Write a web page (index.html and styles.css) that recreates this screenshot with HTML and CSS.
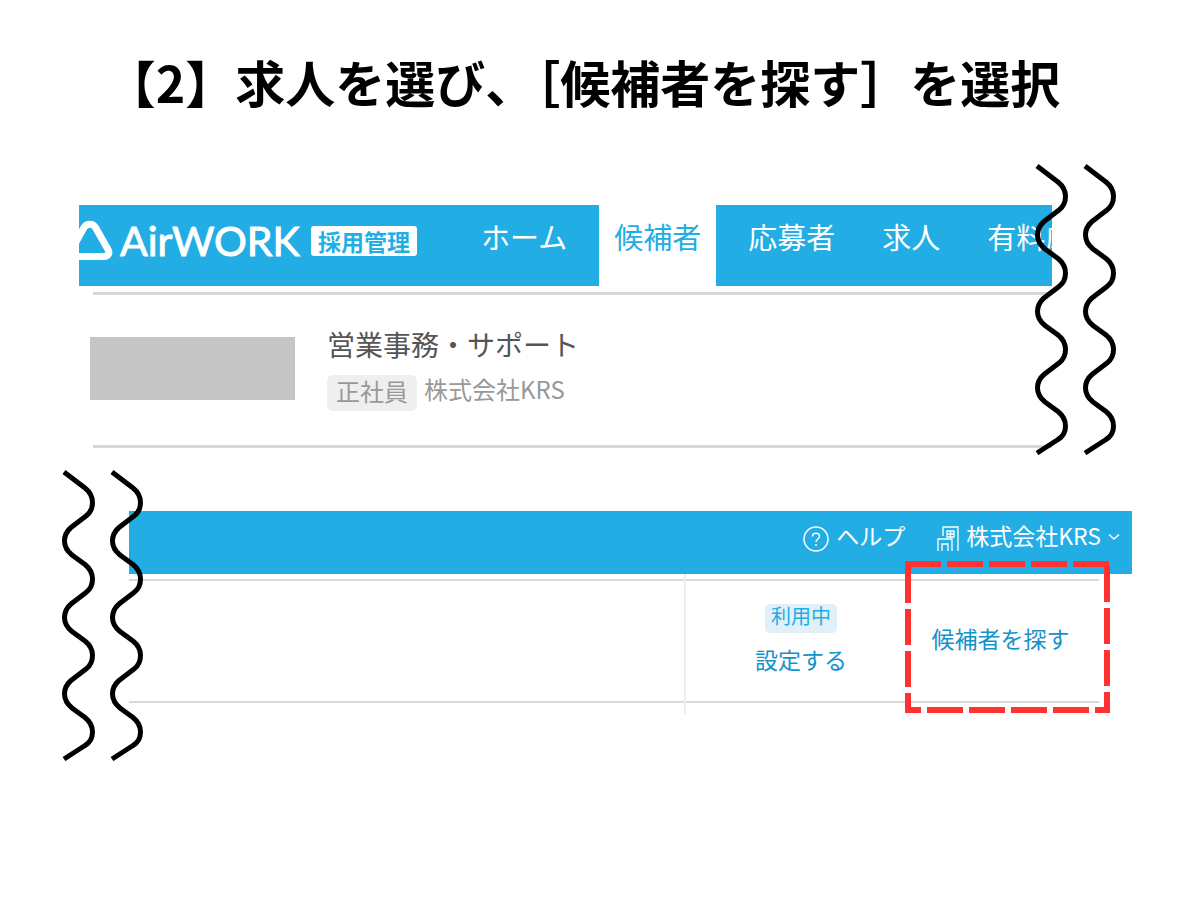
FILE: index.html
```html
<!DOCTYPE html>
<html lang="ja">
<head>
<meta charset="utf-8">
<meta name="viewport" content="width=device-width, initial-scale=1">
<title>求人を選び、候補者を探すを選択</title>
<link rel="stylesheet" href="styles.css">
</head>
<body>
<svg class="defs" aria-hidden="true">
  <symbol id="wave" viewBox="0 0 34 292">
    <path fill="none" stroke="#000" stroke-width="5" d="M3 3L24 19C29 23 31.5 27 31.500 33.500S29 44 25 47L10 58.500C6 62 3.500 66 3.500 72S6 82 11 86L24 95.500C29 99.500 31.500 104 31.500 110S29 120.500 25 123.500L10 135C6 138.500 3.500 142.500 3.500 148.500S6 158.500 11 162.500L24 172C29 176 31.500 180 31.500 186.500S29 197 25 200L10 211.500C6 215 3.500 219 3.500 225S6 235 11 239L24 248.500C29 252.500 31.500 257 31.500 263S29 273.500 24 276.500L3 290"/>
  </symbol>
</svg>
<main class="page">
  <h1 class="title">【2】求人を選び、［候補者を探す］を選択</h1>

  <section class="panel panel-left">
    <header class="bar">
      <a class="logo" href="#">
        <svg class="logo-mark" viewBox="0 0 34 44" aria-hidden="true"><path d="M-6 37.500H24.500C29.500 37.500 31 34 29 30.500L16.500 8.500C14 4 7.500 4 5 8.500L-8 32" fill="none" stroke="#fff" stroke-width="7" stroke-linejoin="round"/></svg>
        <span class="logo-name">AirWORK</span>
        <span class="logo-badge">採用管理</span>
      </a>
      <nav class="tabs">
        <a class="tab" href="#">ホーム</a>
        <a class="tab tab-active" href="#">候補者</a>
        <a class="tab" href="#">応募者</a>
        <a class="tab" href="#">求人</a>
        <a class="tab" href="#">有料応</a>
      </nav>
    </header>
    <article class="job">
      <div class="thumb"></div>
      <div class="job-info">
        <h2 class="job-title">営業事務・サポート</h2>
        <p class="job-meta"><span class="tag">正社員</span><span>株式会社KRS</span></p>
      </div>
    </article>
    <div class="waves waves-right"><svg><use href="#wave"/></svg><svg><use href="#wave"/></svg></div>
  </section>

  <section class="panel panel-right">
    <header class="bar bar-account">
      <a class="bar-link" href="#">
        <svg class="help-icon" viewBox="0 0 26 26" fill="none" stroke="#fff" aria-hidden="true"><circle cx="13" cy="13" r="12" stroke-width="1.500"/><path d="M9.500 10.500C9.500 6 16.500 6 16.500 10.500C16.500 13 13 13 13 16M13 18V20" stroke-width="1.500"/></svg>
        <span>ヘルプ</span>
      </a>
      <button class="bar-link" type="button">
        <svg class="building-icon" viewBox="0 0 22 26" fill="none" stroke="#fff" stroke-width="1.300" aria-hidden="true"><path d="M6 10V1H21V25M1 25V13H15V25M5 25V18H11V25M10 5H17V11H10ZM13.500 5V11M10 8H17"/></svg>
        <span>株式会社KRS</span>
        <svg class="chevron" viewBox="0 0 12 8" fill="none" stroke="#fff" stroke-width="1.500" aria-hidden="true"><path d="M1 1.500L6 6L11 1.500"/></svg>
      </button>
    </header>
    <div class="actions">
      <div class="cell cell-status">
        <span class="status">利用中</span>
        <a class="link" href="#">設定する</a>
      </div>
      <div class="cell cell-search">
        <a class="link" href="#">候補者を探す</a>
        <svg class="marker" viewBox="0 0 205 152" fill="none" stroke="#ff3131" stroke-width="6" stroke-dasharray="36 6" aria-hidden="true">
          <path d="M0 3H204M3 6V152M202 5V150"/><path d="M0 149H205" stroke-dashoffset="20"/>
        </svg>
      </div>
    </div>
    <div class="waves waves-left"><svg><use href="#wave"/></svg><svg><use href="#wave"/></svg></div>
  </section>
</main>
</body>
</html>
```
FILE: styles.css
```css
* { box-sizing: border-box; }
body {
  margin: 0;
  background: #fff;
  color: #555;
  font-family: "Noto Sans CJK JP", sans-serif;
}
a { color: inherit; text-decoration: none; }
h1, h2, p { margin: 0; }
.defs { position: absolute; width: 0; height: 0; }
.page { min-height: 100vh; padding: 45px 0 80px; }
.title {
  padding-right: 34px;
  color: #000;
  font-size: 50px;
  font-weight: 700;
  line-height: 72px;
  text-align: center;
  white-space: nowrap;
}
.panel { position: relative; }
.panel-left { margin: 88px 148px 0 79px; }
.panel-right { margin: 63px 68px 0 129px; }
.bar {
  display: flex;
  height: 81px;
  overflow: hidden;
  background: #22ade5;
  color: #fff;
}
.logo {
  display: flex;
  flex: none;
  align-items: center;
  height: 72px;
}
.logo-mark { width: 34px; height: 44px; }
.logo-name {
  width: 184px;
  margin-left: 7px;
  font-family: Lato, sans-serif;
  font-size: 41px;
  line-height: 48px;
  -webkit-text-stroke: 1px #fff;
}
.logo-badge {
  margin-left: 7px;
  padding: 0 7px;
  border-radius: 3px;
  background: #fff;
  color: #22ade5;
  font-size: 23px;
  font-weight: 700;
  line-height: 30px;
}
.tabs {
  display: flex;
  flex: none;
  gap: 17px;
  margin-left: 49px;
}
.tab {
  padding: 0 15px;
  font-size: 29px;
  line-height: 63px;
  white-space: nowrap;
}
.tab-active { background: #fff; color: #22ade5; }
.job {
  display: flex;
  gap: 32px;
  margin: 6px 0 0 14px;
  height: 156px;
  border-top: 3px solid #d6d6d6;
  border-bottom: 3px solid #d6d6d6;
}
.thumb {
  width: 205px;
  height: 63px;
  margin: 42px 0 0 -3px;
  background: #c5c5c5;
}
.job-info { padding-top: 29px; }
.job-title {
  font-size: 28px;
  font-weight: 400;
  line-height: 40px;
}
.job-meta {
  display: flex;
  gap: 7px;
  margin-top: 11px;
  color: #999;
  font-size: 24px;
  line-height: 28px;
}
.tag {
  height: 36px;
  padding: 2px 9px;
  border-radius: 6px;
  background: #efefef;
}
.bar-account {
  justify-content: flex-end;
  align-items: flex-start;
  gap: 32px;
  height: 63px;
  padding: 7px 12px 0 0;
}
.bar-link {
  display: flex;
  align-items: center;
  gap: 7px;
  padding: 0;
  border: 0;
  background: none;
  color: #fff;
  font-family: inherit;
  font-size: 23px;
  line-height: 34px;
}
.help-icon { width: 26px; height: 26px; margin-top: 7px; }
.building-icon { width: 22px; height: 26px; margin-top: 7px; }
.chevron { width: 12px; height: 8px; margin-top: 4px; }
.actions {
  display: flex;
  justify-content: flex-end;
  height: 124px;
  margin: 5px 33px 0 0;
  border-top: 2px solid #d9d9d9;
  border-bottom: 2px solid #d9d9d9;
}
.cell {
  position: relative;
  display: flex;
  flex-direction: column;
  align-items: center;
}
.cell-status { width: 234px; padding-top: 23px; }
.cell-status::before {
  content: "";
  position: absolute;
  left: 0;
  top: -7px;
  width: 2px;
  height: 140px;
  background: #eee;
}
.status {
  height: 29px;
  padding: 0 6px;
  border-radius: 5px;
  background: #e1eff9;
  color: #22ade5;
  font-size: 20px;
  line-height: 24px;
}
.link { color: #1492ca; font-size: 23px; line-height: 34px; }
.cell-status .link { margin-top: 9px; }
.cell-search { width: 181px; padding: 40px 16px 0 0; }
.marker {
  position: absolute;
  left: -13px;
  top: -20px;
  width: 205px;
  height: 152px;
}
.waves {
  position: absolute;
  top: -42px;
  display: flex;
  gap: 14px;
}
.waves svg { width: 34px; height: 292px; }
.waves-right { right: -64px; }
.waves-left { left: -68px; }
```
